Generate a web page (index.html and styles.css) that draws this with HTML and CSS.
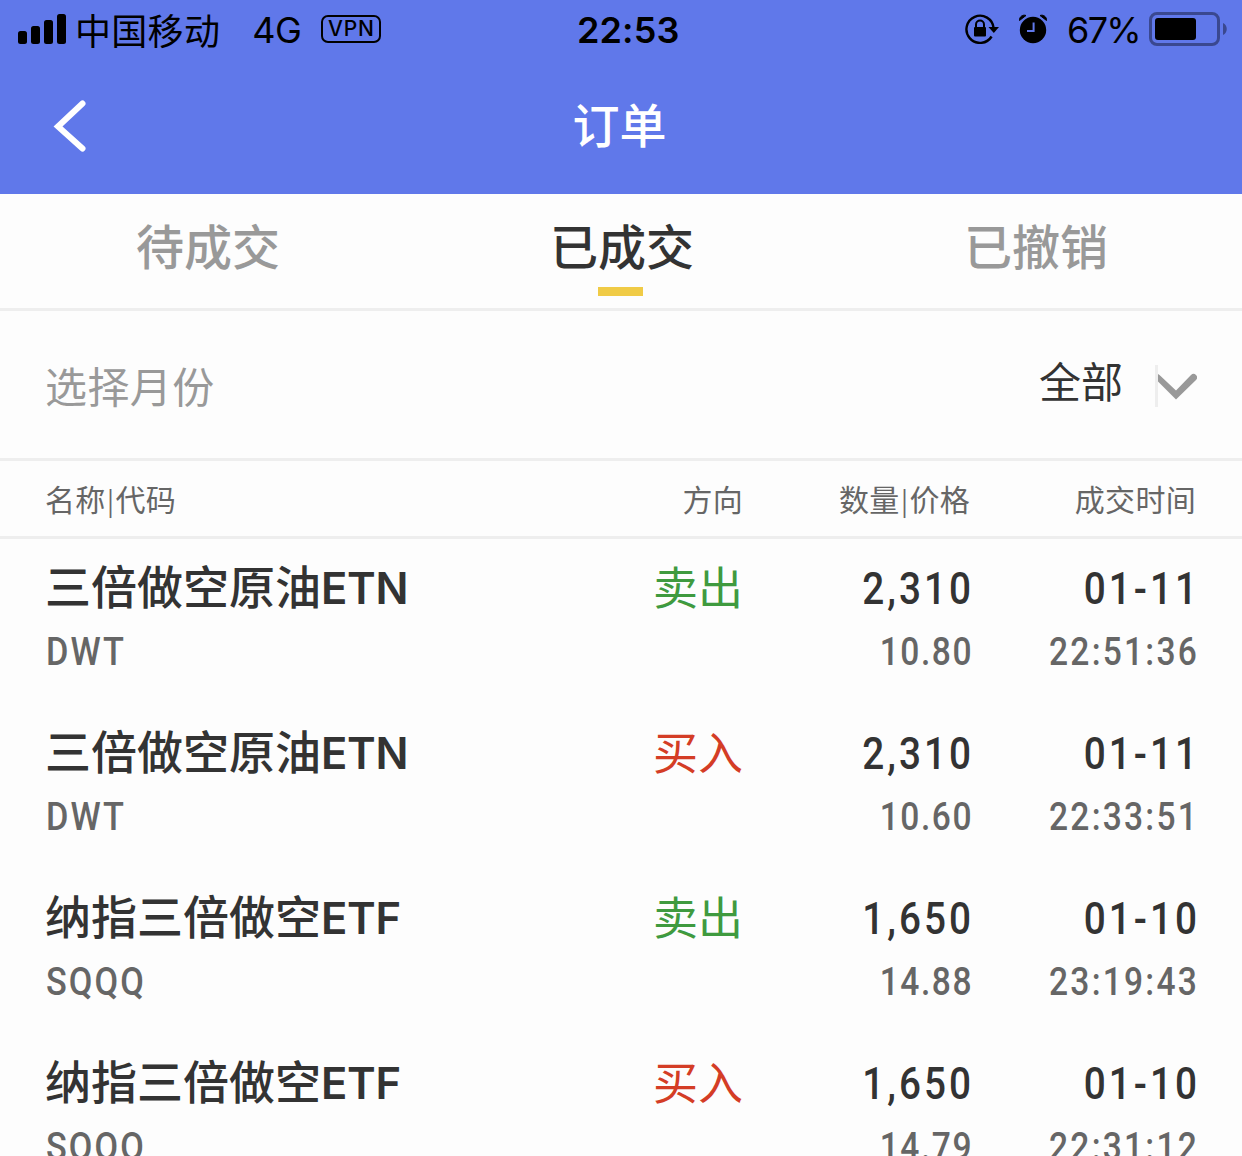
FILE: index.html
```
<!DOCTYPE html>
<html lang="zh-CN">
<head>
  <meta charset="UTF-8" />
  <meta name="viewport" content="width=device-width, initial-scale=1.0"/>
  <title>订单</title>
  <link rel="stylesheet" href="styles.css">
</head>
<body>
  <header>
    <div class="status-bar">
      <div class="status-left">
        <svg class="signal" width="48" height="30" viewBox="0 0 48 30">
          <rect x="0" y="17" width="9" height="13" rx="2.5"/>
          <rect x="13" y="12" width="9" height="18" rx="2.5"/>
          <rect x="26" y="6" width="9" height="24" rx="2.5"/>
          <rect x="39" y="0" width="9" height="30" rx="2.5"/>
        </svg>
        <span class="carrier">中国移动</span>
        <span class="network">4G</span>
        <span class="vpn">VPN</span>
      </div>
      <span class="clock">22:53</span>
      <div class="status-right">
        <svg width="34" height="30" viewBox="0 0 34 30">
          <path d="M26.600 22.500A13.600 13.600 0 1 1 28.600 14" fill="none" stroke="#000" stroke-width="2.4"/>
          <path d="M23.500 13H34l-5.200 6z"/>
          <rect x="9" y="13" width="12" height="9.500" rx="1"/>
          <path d="M11 14v-3.500a4 4 0 0 1 8 0V14" fill="none" stroke="#000" stroke-width="2"/>
        </svg>
        <svg class="alarm" width="30" height="30" viewBox="0 0 30 30">
          <circle cx="15" cy="16" r="13.200"/>
          <path d="M1.500 6.500A4.800 4.800 0 0 1 8 1.500z" stroke="#000" stroke-linejoin="round"/>
          <path d="M28.500 6.500A4.800 4.800 0 0 0 22 1.500z" stroke="#000" stroke-linejoin="round"/>
          <path d="M15.600 8.500V17H9" fill="none" stroke="#6078ea" stroke-width="2"/>
        </svg>
        <span class="percent">67%</span>
        <svg width="78" height="34" viewBox="0 0 78 34">
          <rect x="1.500" y="1.500" width="68" height="31" rx="6.500" fill="none" stroke="#3a4890" stroke-width="3"/>
          <rect x="6" y="6" width="41" height="22" rx="3"/>
          <path d="M74 11c5 2 5 10 0 12z" fill="#3a4890"/>
        </svg>
      </div>
    </div>
    <div class="nav-bar">
      <svg class="back" width="34" height="54" viewBox="0 0 34 54">
        <path d="M29.500 4.500L5 27.500l24.500 22" fill="none" stroke="#fff" stroke-width="6" stroke-linecap="round"/>
      </svg>
      <h1>订单</h1>
    </div>
  </header>

  <nav class="tabs">
    <div class="tab">待成交</div>
    <div class="tab active">已成交</div>
    <div class="tab">已撤销</div>
  </nav>

  <div class="filter">
    <span class="filter-label">选择月份</span>
    <span class="filter-value">全部</span>
    <svg class="arrow" width="42" height="42" viewBox="0 0 42 42">
      <rect x="0" y="0" width="3" height="42" fill="#eee"/>
      <path d="M3 9v7.500l18 18L41 15a3 3 0 0 0-5-5L21 25.500 4.500 10z" fill="#999"/>
    </svg>
  </div>

  <div class="row table-head">
    <span>名称<i>|</i>代码</span>
    <span>方向</span>
    <span>数量<i>|</i>价格</span>
    <span>成交时间</span>
  </div>

  <main>
    <div class="row order">
      <div><p class="name">三倍做空原油<b>ETN</b></p><p class="code">DWT</p></div>
      <div><p class="side sell">卖出</p></div>
      <div><p class="num">2,310</p><p class="price">10.80</p></div>
      <div><p class="num">01-11</p><p class="time">22:51:36</p></div>
    </div>
    <div class="row order">
      <div><p class="name">三倍做空原油<b>ETN</b></p><p class="code">DWT</p></div>
      <div><p class="side buy">买入</p></div>
      <div><p class="num">2,310</p><p class="price">10.60</p></div>
      <div><p class="num">01-11</p><p class="time">22:33:51</p></div>
    </div>
    <div class="row order">
      <div><p class="name">纳指三倍做空<b>ETF</b></p><p class="code">SQQQ</p></div>
      <div><p class="side sell">卖出</p></div>
      <div><p class="num">1,650</p><p class="price">14.88</p></div>
      <div><p class="num">01-10</p><p class="time">23:19:43</p></div>
    </div>
    <div class="row order">
      <div><p class="name">纳指三倍做空<b>ETF</b></p><p class="code">SQQQ</p></div>
      <div><p class="side buy">买入</p></div>
      <div><p class="num">1,650</p><p class="price">14.79</p></div>
      <div><p class="num">01-10</p><p class="time">22:31:12</p></div>
    </div>
  </main>
</body>
</html>
```
FILE: styles.css
```
* {
  box-sizing: border-box;
  margin: 0;
  padding: 0;
}
body {
  height: 1156px;
  overflow: hidden;
  background: #fdfdfd;
  color: #333;
  font-family: "Noto Sans CJK SC", sans-serif;
}
svg {
  display: block;
  flex: none;
}
header {
  height: 194px;
  background: #6078ea;
}

/* status bar */
.status-bar {
  display: grid;
  grid-template-columns: 559px 1fr auto;
  align-items: center;
  height: 60px;
  padding: 0 15px 0 18px;
  color: #000;
  line-height: 60px;
}
.status-left,
.status-right {
  display: flex;
  align-items: center;
  height: 60px;
  padding-bottom: 2px;
}
.carrier {
  margin-left: 9px;
  font-size: 36px;
  letter-spacing: 0.3px;
}
.network {
  margin-left: 32px;
  padding-top: 2px;
  font-family: Inter, sans-serif;
  font-size: 36px;
  letter-spacing: -0.5px;
}
.vpn {
  width: 60px;
  height: 28px;
  margin-left: 20px;
  border: 2px solid #000;
  border-radius: 7px;
  font: 500 21px/24px Inter, sans-serif;
  letter-spacing: 0.8px;
  text-align: center;
}
.clock {
  font-family: Inter, sans-serif;
  font-size: 36px;
  font-weight: 600;
  letter-spacing: 0.1px;
}
.alarm {
  margin: 0 19px;
}
.percent {
  margin-right: 9px;
  padding-top: 2px;
  font-family: Inter, sans-serif;
  font-size: 36px;
  letter-spacing: -1.7px;
}

/* title */
.nav-bar {
  display: grid;
  grid-template-columns: 1fr auto 1fr;
  height: 134px;
  padding: 0 56px 0 53px;
}
.back {
  margin-top: 39px;
}
h1 {
  color: #fff;
  font-size: 47px;
  font-weight: 500;
  line-height: 126px;
}

.tabs {
  display: grid;
  grid-template-columns: repeat(3, 1fr);
  height: 117px;
  border-bottom: 3px solid #eee;
}
.tab {
  padding-left: 2px;
  color: #999;
  font-size: 48px;
  font-weight: 500;
  line-height: 101px;
  text-align: center;
}
.active {
  color: #333;
}
.active::after {
  content: "";
  display: block;
  width: 45px;
  height: 9px;
  margin: -8px 0 0 182px;
  background: #f0cb46;
}

.filter {
  display: flex;
  align-items: center;
  height: 150px;
  padding: 2px 45px 0;
  border-bottom: 3px solid #eee;
  font-size: 42px;
}
.filter-label {
  flex: 1;
  padding-bottom: 3px;
  color: #999;
  letter-spacing: 0.4px;
}
.filter-value {
  margin-right: 32px;
  padding-bottom: 13px;
}

/* order table */
.row {
  display: grid;
  grid-template-columns: 1fr 140px 227px 226px;
  padding: 0 46px 0 45px;
  text-align: right;
}
.row > :first-child {
  text-align: left;
}
.table-head {
  height: 78px;
  border-bottom: 3px solid #eee;
  color: #666;
  font-size: 30px;
  line-height: 74px;
  letter-spacing: 0.3px;
}
.table-head i {
  padding: 0 1px 0 1.5px;
  font-size: 26px;
  font-style: normal;
}
.order {
  height: 165px;
  padding-top: 14px;
  white-space: nowrap;
}
.name,
.side,
.num {
  height: 70px;
}
.name {
  font-size: 46px;
  font-weight: 500;
  line-height: 63px;
}
.name b {
  font-family: Inter, sans-serif;
  font-size: 43.5px;
  font-weight: 600;
  letter-spacing: -0.3px;
}
.side {
  font-size: 45px;
  line-height: 65px;
}
.sell {
  color: #3f9a3f;
}
.buy {
  color: #d43d26;
}

/* narrow figures */
.num,
.price,
.time {
  transform: scaleX(0.86);
  transform-origin: right;
}
.num {
  margin-right: -4px;
  font-family: Roboto, sans-serif;
  font-size: 45px;
  font-weight: 500;
  line-height: 71px;
  letter-spacing: 3.5px;
}
.code,
.price,
.time {
  color: #666;
  font: 500 39px/59px Roboto, sans-serif;
}
.code {
  padding-left: 1px;
  letter-spacing: 2.4px;
  transform: scaleX(0.88);
  transform-origin: left;
}
.price {
  margin-right: -3px;
  letter-spacing: 1.8px;
}
.time {
  margin-right: -3px;
  letter-spacing: 2.6px;
}
```
